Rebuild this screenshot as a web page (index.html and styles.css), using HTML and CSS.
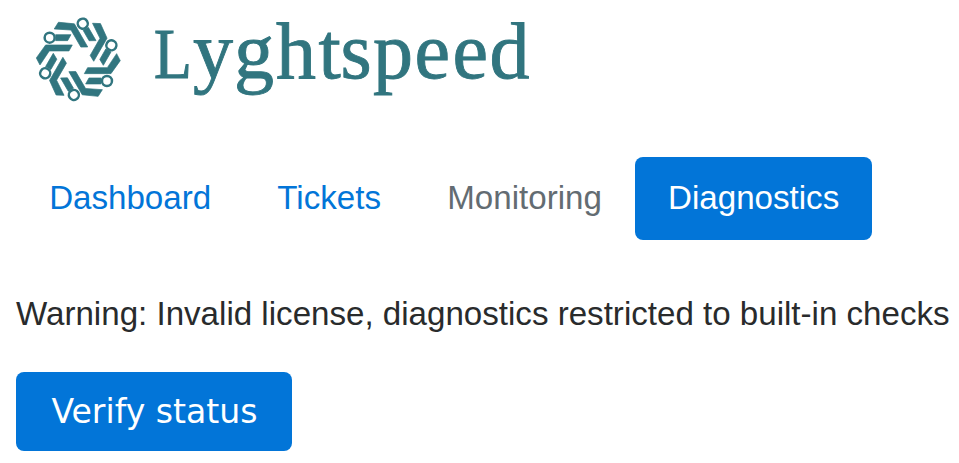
FILE: index.html
```html
<!DOCTYPE html>
<html lang="en">
<head>
<meta charset="utf-8">
<title>Lyghtspeed</title>
<link rel="stylesheet" href="styles.css">
</head>
<body>
<header class="brand">
  <svg class="logo" viewBox="0 0 520 92" role="img" aria-label="Lyghtspeed">
    <defs>
      <g id="arm">
        <path class="fill" d="M-98-43H-18L-28-25H-87L-115 17L-126-4Z M-68-74H-22L-32-56H-68Z"/>
        <circle class="node" cx="-86" cy="-65" r="15"/>
      </g>
    </defs>
    <g transform="translate(62.3 44.3) scale(.3333)">
      <use href="#arm"/>
      <use href="#arm" transform="rotate(60)"/>
      <use href="#arm" transform="rotate(120)"/>
      <use href="#arm" transform="rotate(180)"/>
      <use href="#arm" transform="rotate(240)"/>
      <use href="#arm" transform="rotate(300)"/>
    </g>
    <text class="wordmark initial" transform="translate(138 63) scale(.86 1)">L</text>
    <text class="wordmark" y="63" x="177 218 260 302.5 324.5 357 398.5 436.5 473.5">yghtspeed</text>
  </svg>
</header>
<nav class="tabs">
  <a class="tab">Dashboard</a>
  <a class="tab">Tickets</a>
  <a class="tab muted">Monitoring</a>
  <a class="tab active">Diagnostics</a>
</nav>
<p class="message">Warning: Invalid license, diagnostics restricted to built-in checks</p>
<button class="verify" type="button">Verify status</button>
</body>
</html>
```
FILE: styles.css
```css
body {
  margin: 0;
  padding: 15px 0 0 16px;
  background: #fff;
  color: #292b2c;
  font: 33.12px/50px "Liberation Sans", Arial, sans-serif;
  overflow: hidden;
}
.brand { height: 142px; }
.logo { display: block; width: 520px; height: 92px; overflow: visible; }
.fill { fill: #31757f; stroke: #31757f; stroke-width: 2; }
.node { fill: #fff; stroke: #31757f; stroke-width: 7.5; }
.wordmark {
  fill: #31757f;
  stroke: #31757f;
  stroke-width: .9px;
  font: 80px "Liberation Serif", serif;
}
.initial { font-size: 72px; stroke-width: 1.2px; }
.tabs { display: flex; }
.tab {
  height: 50px;
  padding: 16px 33.14px 17px;
  border-radius: 8px;
  color: #0275d8;
  white-space: nowrap;
}
.muted { color: #636c72; }
.active { background: #0275d8; color: #fff; }
.message { margin: 49px 0 33px; white-space: nowrap; }
.verify {
  display: block;
  width: 276px;
  height: 79px;
  padding: 0 0 0 1px;
  border: 0;
  border-radius: 8px;
  background: #0275d8;
  color: #fff;
  font: 33.12px/79px "DejaVu Sans", sans-serif;
}
```
